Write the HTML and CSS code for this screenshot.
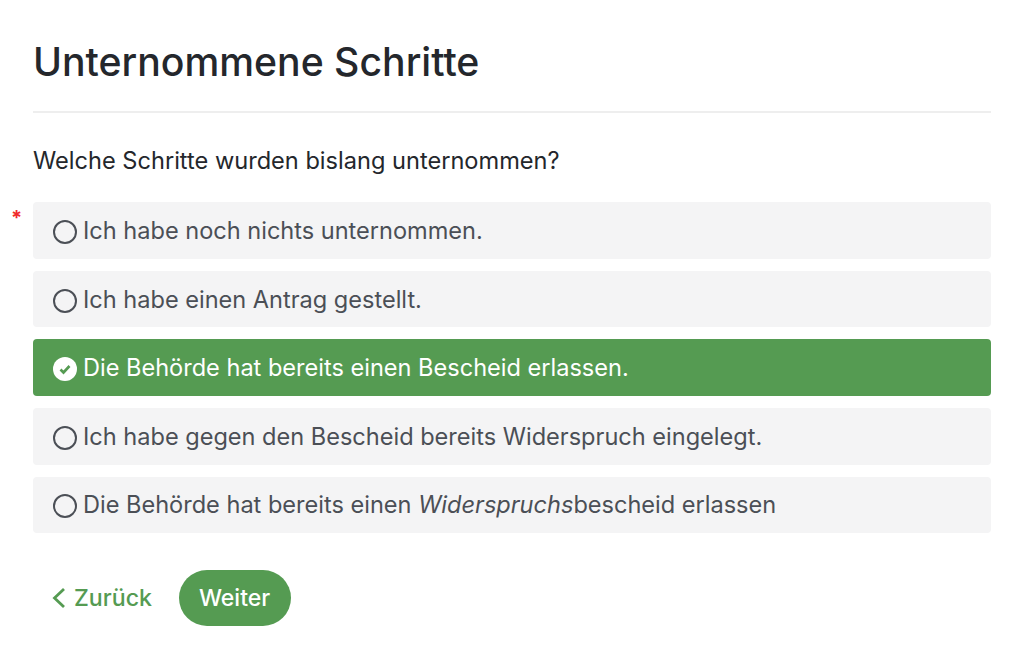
FILE: index.html
```html
<!DOCTYPE html>
<html lang="de">
<head>
    <meta charset="UTF-8">
    <title>Unternommene Schritte</title>
    <link rel="stylesheet" href="styles.css">
</head>
<body>
    <h1 class="page-title">Unternommene Schritte</h1>
    <p class="question">Welche Schritte wurden bislang unternommen?</p>
    <div class="options">
        <span class="required">*</span>
        <div class="option">
            <span class="radio"></span>Ich habe noch nichts unternommen.
        </div>
        <div class="option">
            <span class="radio"></span>Ich habe einen Antrag gestellt.
        </div>
        <div class="option selected">
            <svg class="check" viewBox="0 0 24 24" width="24" height="24">
                <circle cx="12" cy="12" r="12" fill="#fff"/>
                <path d="M7.5 12.5l3 3 6-6.5" fill="none" stroke="#559b52" stroke-width="2.6"/>
            </svg>Die Behörde hat bereits einen Bescheid erlassen.
        </div>
        <div class="option">
            <span class="radio"></span>Ich habe gegen den Bescheid bereits Widerspruch eingelegt.
        </div>
        <div class="option">
            <span class="radio"></span><span>Die Behörde hat bereits einen <em>Widerspruchs</em>bescheid erlassen</span>
        </div>
    </div>
    <div class="actions">
        <a class="back" href="#">
            <svg viewBox="0 0 14 24" width="14" height="24">
                <path d="M12 3L2.5 12l9.500 9" fill="none" stroke="#559b52" stroke-width="2.8"/>
            </svg>Zurück
        </a>
        <button class="next">Weiter</button>
    </div>
</body>
</html>
```

FILE: styles.css
```css
body {
    margin: 0;
    padding: 0 33px;
    font-family: "Inter", "Liberation Sans", sans-serif;
    color: #24272c;
    background: #fff;
}

.page-title {
    margin: 0;
    padding: 38px 0 25px;
    font-size: 39.2px;
    line-height: 48px;
    font-weight: 500;
    border-bottom: 2px solid #eeeeee;
}

.question {
    margin: 34px 0 27px;
    font-size: 23.6px;
    line-height: 28px;
}

.options {
    position: relative;
    display: flex;
    flex-direction: column;
    gap: 11.9px;
}

.required {
    position: absolute;
    left: -22px;
    top: 4px;
    color: #f02b2b;
    font-size: 20px;
    font-weight: 700;
}

.option {
    display: flex;
    align-items: center;
    height: 56.75px;
    padding-left: 20px;
    font-size: 23.55px;
    color: #4b4f56;
    background: #f4f4f5;
    border-radius: 4px;
}

.option em {
    font-style: italic;
}

.option.selected {
    color: #fff;
    background: #559b52;
}

.radio {
    box-sizing: border-box;
    width: 24px;
    height: 24px;
    margin: 3px 6px 0 0;
    border: 2px solid #4b4f56;
    border-radius: 50%;
    flex-shrink: 0;
}

.check {
    margin: 3px 6px 0 0;
    flex-shrink: 0;
}

.actions {
    display: flex;
    align-items: center;
    gap: 26.5px;
    margin-top: 37px;
}

.back {
    display: flex;
    align-items: center;
    gap: 8px;
    margin-left: 19px;
    font-size: 23.2px;
    font-weight: 500;
    color: #559b52;
    text-decoration: none;
}

.next {
    width: 112px;
    height: 56px;
    border: 0;
    border-radius: 28px;
    font-family: inherit;
    font-size: 23px;
    font-weight: 500;
    color: #fff;
    background: #559b52;
}
```
